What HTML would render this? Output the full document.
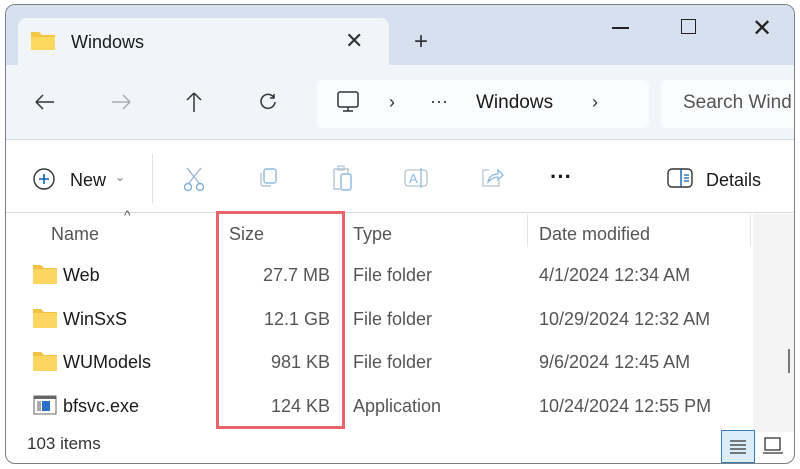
<!DOCTYPE html>
<html><head><style>
*{margin:0;padding:0;box-sizing:border-box}
body{width:800px;height:469px;background:#fff;font-family:"Liberation Sans",sans-serif;position:relative;overflow:hidden;color:#1a1a1a}
.win{position:absolute;left:5px;top:4px;width:790px;height:460px;border:1.5px solid #7b7f85;border-radius:10px;overflow:hidden;background:#fff}
.title{position:absolute;left:0;top:0;width:100%;height:60px;background:#d7e0ee}
.tab{position:absolute;left:12px;top:13px;width:371px;height:50px;background:#f1f5fa;border-radius:8px 8px 0 0}
.nav{position:absolute;left:0;top:60px;width:100%;height:75px;background:#f1f5fa;border-bottom:1.5px solid #d6d9de}
.tool{position:absolute;left:0;top:136px;width:100%;height:72px;background:#fff;border-bottom:1.5px solid #d9dce0}
.t{position:absolute;font-size:18px;white-space:nowrap}
.box{position:absolute;background:#fbfcfe;border-radius:6px}
.g{color:#555}
svg{position:absolute}
</style></head><body>
<div class="win">
<div class="title"></div>
<div class="tab"></div>
<div class="nav"></div>
<div class="tool"></div>
<div class="box" style="left:311px;top:75px;width:332px;height:48px"></div>
<div class="box" style="left:655px;top:75px;width:140px;height:48px"></div>
<div style="position:absolute;left:747px;top:209px;width:43px;height:218px;background:#f3f3f3"></div>
<div style="position:absolute;left:521px;top:209px;width:1px;height:33px;background:#e4e4e4"></div>
<div style="position:absolute;left:744px;top:209px;width:1px;height:33px;background:#e4e4e4"></div>
<div style="position:absolute;left:782px;top:344px;width:2px;height:24px;background:#777"></div>
</div>
<!-- tab folder -->
<svg style="left:30px;top:29px" width="26" height="22" viewBox="0 0 26 22"><path d="M1 3h8l3 3h13v15H1z" fill="#f5c544"/><path d="M1 8h24v13H1z" fill="#fcd95e"/></svg>
<div class="t" style="left:71px;top:32px;font-size:18px">Windows</div>
<div class="t" style="left:345px;top:28px;font-size:22px;color:#333">✕</div>
<div class="t" style="left:414px;top:28px;font-size:24px;color:#333">+</div>
<div style="position:absolute;left:612px;top:27px;width:17px;height:1.5px;background:#222"></div>
<div style="position:absolute;left:681px;top:19px;width:15px;height:15px;border:1.5px solid #222"></div>
<div class="t" style="left:752px;top:14px;font-size:24px;color:#222">✕</div>
<!-- nav -->
<svg style="left:34px;top:92px" width="22" height="20"><path d="M2 10h18M2 10l7-7M2 10l7 7" stroke="#333" stroke-width="1.5" fill="none"/></svg>
<svg style="left:110px;top:92px" width="22" height="20"><path d="M20 10H2M20 10l-7-7M20 10l-7 7" stroke="#a9adb3" stroke-width="1.5" fill="none"/></svg>
<svg style="left:184px;top:91px" width="20" height="22"><path d="M10 2v19M10 2L3 9M10 2l7 7" stroke="#333" stroke-width="1.5" fill="none"/></svg>
<svg style="left:258px;top:92px" width="20" height="20"><path d="M15.5 5A7 7 0 1 0 17 10M16 2v4h-4" stroke="#333" stroke-width="1.5" fill="none"/></svg>
<svg style="left:336px;top:90px" width="24" height="24"><rect x="2" y="2" width="20" height="15" rx="2" stroke="#333" stroke-width="1.5" fill="none"/><path d="M7 21h10M12 17v4" stroke="#333" stroke-width="1.5"/></svg>
<div class="t" style="left:389px;top:92px;color:#333">›</div>
<div class="t" style="left:430px;top:91px;color:#333">···</div>
<div class="t" style="left:476px;top:92px;font-size:19px">Windows</div>
<div class="t" style="left:592px;top:92px;color:#333">›</div>
<div class="t g" style="left:683px;top:92px;font-size:19px">Search Wind</div>
<!-- toolbar -->
<svg style="left:32px;top:167px" width="24" height="24"><circle cx="12" cy="12" r="10" stroke="#333" stroke-width="1.4" fill="none"/><path d="M12 7v10M7 12h10" stroke="#0a5fb4" stroke-width="1.6"/></svg>
<div class="t" style="left:70px;top:170px">New</div>
<div class="t" style="left:115px;top:170px;font-size:12px;color:#777">⌄</div>
<div style="position:absolute;left:152px;top:154px;width:1px;height:50px;background:#e3e3e3"></div>
<svg style="left:182px;top:166px" width="24" height="26"><path d="M5 2l12 15M19 2L7 17" stroke="#9bb6d3" stroke-width="1.4"/><circle cx="6" cy="21" r="3.5" stroke="#7fb0dc" stroke-width="1.4" fill="none"/><circle cx="18" cy="21" r="3.5" stroke="#7fb0dc" stroke-width="1.4" fill="none"/></svg>
<svg style="left:256px;top:166px" width="24" height="24"><rect x="8" y="3" width="12" height="14" rx="2" stroke="#8db8e0" stroke-width="1.4" fill="none"/><path d="M5 7v11a2 2 0 0 0 2 2h8" stroke="#b7c3cf" stroke-width="1.4" fill="none"/></svg>
<svg style="left:330px;top:164px" width="24" height="28"><path d="M4 5h14v4M4 5v20h6" stroke="#b7c3cf" stroke-width="1.4" fill="none"/><rect x="8" y="2" width="6" height="4" stroke="#b7c3cf" stroke-width="1.2" fill="none"/><rect x="11" y="10" width="10" height="16" rx="2" stroke="#8db8e0" stroke-width="1.4" fill="none"/></svg>
<svg style="left:403px;top:166px" width="28" height="24"><rect x="2" y="4" width="22" height="16" rx="3" stroke="#b7c3cf" stroke-width="1.3" fill="none"/><text x="6" y="17" font-size="13" fill="#8db8e0" font-family="Liberation Sans">A</text><path d="M18 2v20" stroke="#8db8e0" stroke-width="1.3"/></svg>
<svg style="left:479px;top:166px" width="26" height="24"><path d="M10 4H4v16h16v-5" stroke="#b7c3cf" stroke-width="1.3" fill="none"/><path d="M9 16c1-5 4-8 10-8V4l5 5-5 5v-3c-4 0-7 2-10 5z" stroke="#8db8e0" stroke-width="1.3" fill="none"/></svg>
<div class="t" style="left:550px;top:164px;font-size:22px;font-weight:bold">···</div>
<svg style="left:666px;top:167px" width="28" height="22"><rect x="2" y="2" width="24" height="18" rx="4" stroke="#333" stroke-width="1.4" fill="none"/><path d="M15 2v18" stroke="#0a5fb4" stroke-width="1.4"/><path d="M18 8h5M18 11h5M18 14h5" stroke="#0a5fb4" stroke-width="1.2"/></svg>
<div class="t" style="left:706px;top:170px">Details</div>
<!-- header -->
<div class="t" style="left:124px;top:207px;font-size:14px;color:#555">^</div>
<div class="t g" style="left:51px;top:224px">Name</div>
<div class="t g" style="left:229px;top:224px">Size</div>
<div class="t g" style="left:353px;top:224px">Type</div>
<div class="t g" style="left:539px;top:224px">Date modified</div>
<!-- rows -->
<svg style="left:32px;top:263px" width="26" height="22" viewBox="0 0 26 22"><path d="M1 2h8l3 3h13v16H1z" fill="#f3c143"/><path d="M1 6h24v15H1z" fill="#fcd660"/></svg>
<svg style="left:32px;top:307px" width="26" height="22" viewBox="0 0 26 22"><path d="M1 2h8l3 3h13v16H1z" fill="#f3c143"/><path d="M1 6h24v15H1z" fill="#fcd660"/></svg>
<svg style="left:32px;top:350px" width="26" height="22" viewBox="0 0 26 22"><path d="M1 2h8l3 3h13v16H1z" fill="#f3c143"/><path d="M1 6h24v15H1z" fill="#fcd660"/></svg>
<svg style="left:33px;top:395px" width="24" height="20"><rect x="1" y="1" width="22" height="18" fill="#fff" stroke="#666"/><rect x="1" y="1" width="22" height="3" fill="#666"/><rect x="4" y="6" width="4" height="10" fill="#aaa"/><rect x="9" y="6" width="8" height="10" fill="#2a6fc9"/></svg>
<div class="t" style="left:63px;top:265px">Web</div>
<div class="t" style="left:63px;top:309px">WinSxS</div>
<div class="t" style="left:63px;top:352px">WUModels</div>
<div class="t" style="left:63px;top:396px">bfsvc.exe</div>
<div class="t g" style="right:470px;top:265px">27.7 MB</div>
<div class="t g" style="right:470px;top:309px">12.1 GB</div>
<div class="t g" style="right:470px;top:352px">981 KB</div>
<div class="t g" style="right:470px;top:396px">124 KB</div>
<div class="t g" style="left:353px;top:265px">File folder</div>
<div class="t g" style="left:353px;top:309px">File folder</div>
<div class="t g" style="left:353px;top:352px">File folder</div>
<div class="t g" style="left:353px;top:396px">Application</div>
<div class="t g" style="left:539px;top:265px">4/1/2024 12:34 AM</div>
<div class="t g" style="left:539px;top:309px">10/29/2024 12:32 AM</div>
<div class="t g" style="left:539px;top:352px">9/6/2024 12:45 AM</div>
<div class="t g" style="left:539px;top:396px">10/24/2024 12:55 PM</div>
<div style="position:absolute;left:216px;top:211px;width:129px;height:218px;border:3px solid #e8646a"></div>
<div class="t" style="left:27px;top:434px;font-size:17px;color:#333">103 items</div>
<div style="position:absolute;left:721px;top:430px;width:34px;height:33px;background:#dcecf8;border:1.5px solid #3e7fb8"></div>
<svg style="left:728px;top:437px" width="20" height="20"><path d="M2 4h16M2 8h16M2 12h16M2 16h16" stroke="#333" stroke-width="1.2"/></svg>
<svg style="left:762px;top:435px" width="22" height="22"><rect x="3" y="3" width="15" height="12" stroke="#333" stroke-width="1.3" fill="none"/><path d="M1 18h20" stroke="#333" stroke-width="1.3"/></svg>
</body></html>
